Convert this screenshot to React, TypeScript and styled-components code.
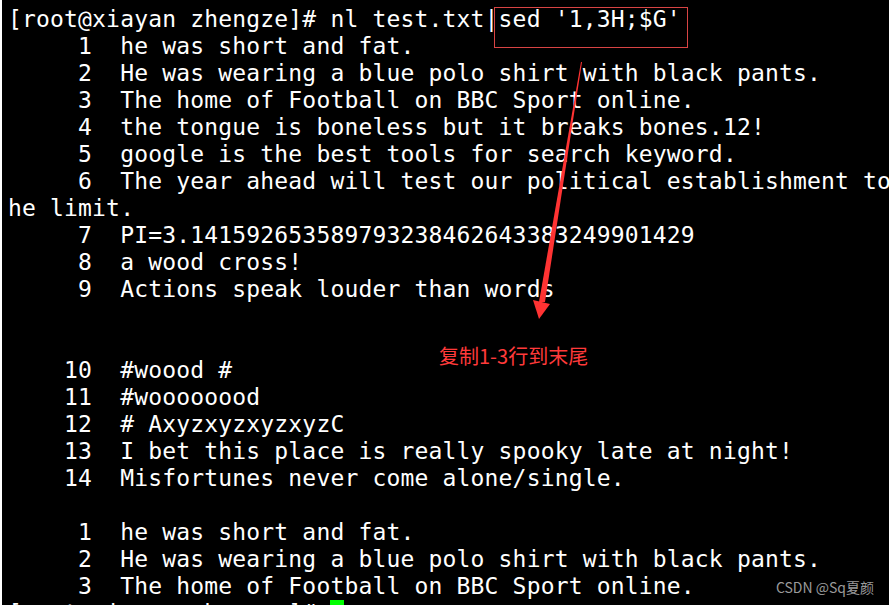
import React from "react";
import styled, { createGlobalStyle } from "styled-components";

const GlobalStyle = createGlobalStyle`
  html, body {
    margin: 0;
    padding: 0;
    background: #fff;
    overflow: hidden;
  }
`;

const Screen = styled.div`
  position: relative;
  width: 889px;
  height: 605px;
  box-sizing: border-box;
  border-left: 2px solid #fff;
  background: #000;
  overflow: hidden;
`;

const Output = styled.div`
  display: flex;
  flex-direction: column;
  padding: 6px 0 0 6px;
  font-family: "DejaVu Sans Mono", "Liberation Mono", monospace;
  font-size: 23px;
  letter-spacing: 0.17px;
  line-height: 27px;
  color: #fff;
  white-space: pre;
`;

const Line = styled.div`
  height: 27px;
`;

const Cursor = styled.span`
  display: inline-block;
  width: 14px;
  height: 27px;
  vertical-align: top;
  background: #00ff00;
`;

const Highlight = styled.div`
  position: absolute;
  left: 492px;
  top: 7px;
  width: 192px;
  height: 39px;
  border: 1px solid #d84444;
`;

const Arrow = styled.svg`
  position: absolute;
  left: 0;
  top: 0;
  pointer-events: none;
`;

const Note = styled.div`
  position: absolute;
  left: 437px;
  top: 342px;
  font-family: "Noto Sans CJK SC", "Noto Sans", sans-serif;
  font-size: 20px;
  line-height: 28px;
  color: #ff3a3a;
`;

const Watermark = styled.div`
  position: absolute;
  right: 15px;
  bottom: 10px;
  font-family: "Noto Sans CJK SC", "Liberation Sans", sans-serif;
  font-size: 14px;
  line-height: 16px;
  color: #9a9a9a;
`;

const lines = [
  "[root@xiayan zhengze]# nl test.txt|sed '1,3H;$G'",
  "     1  he was short and fat.",
  "     2  He was wearing a blue polo shirt with black pants.",
  "     3  The home of Football on BBC Sport online.",
  "     4  the tongue is boneless but it breaks bones.12!",
  "     5  google is the best tools for search keyword.",
  "     6  The year ahead will test our political establishment to t",
  "he limit.",
  "     7  PI=3.141592653589793238462643383249901429",
  "     8  a wood cross!",
  "     9  Actions speak louder than words",
  "",
  "",
  "    10  #woood #",
  "    11  #woooooood",
  "    12  # AxyzxyzxyzxyzC",
  "    13  I bet this place is really spooky late at night!",
  "    14  Misfortunes never come alone/single.",
  "",
  "     1  he was short and fat.",
  "     2  He was wearing a blue polo shirt with black pants.",
  "     3  The home of Football on BBC Sport online.",
];

export default function App() {
  return (
    <>
      <GlobalStyle />
      <Screen>
        <Output>
          {lines.map((text, i) => (
            <Line key={i}>{text}</Line>
          ))}
          <Line>
            {"[root@xiayan zhengze]# "}
            <Cursor />
          </Line>
        </Output>
        <Highlight />
        <Arrow width="889" height="605" viewBox="0 0 889 605">
          <polygon points="579,62 580,62 543,302 537,302" fill="#ff3333" />
          <polygon points="531,300 548,304 537,319" fill="#ff3333" />
        </Arrow>
        <Note>复制1-3行到末尾</Note>
        <Watermark>CSDN @Sq夏颜</Watermark>
      </Screen>
    </>
  );
}
